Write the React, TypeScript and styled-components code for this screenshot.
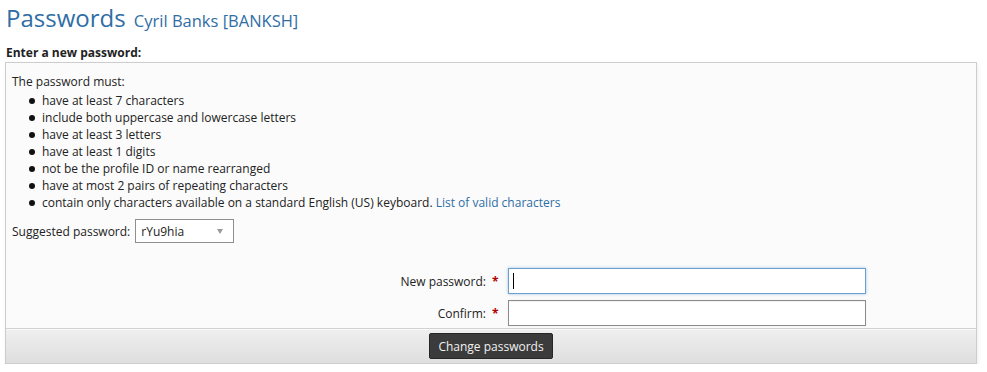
import React from 'react';
import styled, { createGlobalStyle } from 'styled-components';

const GlobalStyle = createGlobalStyle`
  html, body {
    margin: 0;
    padding: 0;
    background: #ffffff;
  }
  body {
    font-family: 'Open Sans', 'Liberation Sans', sans-serif;
    font-size: 12px;
    color: #222;
  }
`;

const StyledPage = styled.div`
  padding: 2px 10px 0 5px;
`;

const StyledHeading = styled.h1`
  margin: 0;
  font-size: 24px;
  font-weight: 400;
  line-height: 32px;
  color: #2f6ea5;
  padding-left: 1px;
`;

const StyledHeadingSub = styled.span`
  font-size: 16.5px;
  margin-left: 2px;
`;

const StyledSectionLabel = styled.div`
  margin-top: 7px;
  font-weight: 700;
  line-height: 17px;
  padding-left: 1px;
`;

const StyledPanel = styled.div`
  margin-top: 1px;
  border: 1px solid #cdcdcd;
  background: #fbfbfb;
  box-shadow: 1px 2px 4px rgba(0, 0, 0, 0.08);
`;

const StyledPanelBody = styled.div`
  padding: 10px 6px 2px 6px;
  line-height: 17px;
`;

const StyledRules = styled.ul`
  margin: 2px 0 0;
  padding-left: 30px;
  list-style: none;
`;

const StyledRule = styled.li`
  &::before {
    content: '';
    display: inline-block;
    width: 6px;
    height: 6px;
    border-radius: 50%;
    background: #111;
    margin-left: -13px;
    margin-right: 7px;
    vertical-align: 1px;
  }
`;

const StyledLink = styled.a`
  color: #2f6ea5;
  text-decoration: none;
`;

const StyledSuggestRow = styled.div`
  display: flex;
  align-items: center;
  gap: 5px;
  margin-top: 8px;
`;

const StyledSelect = styled.div`
  width: 82px;
  height: 22px;
  border: 1px solid #8f8f8f;
  background: #fff;
  display: flex;
  align-items: center;
  justify-content: space-between;
  padding: 0 10px 0 5px;
  box-sizing: content-box;
`;

const StyledArrow = styled.span`
  width: 0;
  height: 0;
  border-left: 3.5px solid transparent;
  border-right: 3.5px solid transparent;
  border-top: 5px solid #9a9a9a;
`;

const StyledFormGrid = styled.div`
  display: grid;
  grid-template-columns: 474px 22px 358px;
  row-gap: 6px;
  align-items: center;
  margin-top: 25px;
`;

const StyledFieldLabel = styled.label`
  text-align: right;
`;

const StyledRequired = styled.span`
  color: #b40000;
  font-weight: 700;
  padding-left: 6px;
`;

const StyledInputWrap = styled.div`
  position: relative;
`;

const StyledInput = styled.input<{ $focused?: boolean }>`
  display: block;
  width: 100%;
  height: 26px;
  box-sizing: border-box;
  margin: 0;
  padding: 0 5px;
  font-family: 'Open Sans', 'Liberation Sans', sans-serif;
  font-size: 12px;
  background: #fff;
  border: 1px solid ${p => (p.$focused ? '#6c9fca' : '#8c8c8c')};
  box-shadow: ${p =>
    p.$focused ? '0 0 3px rgba(90, 150, 210, 0.55)' : 'inset 0 1px 1px rgba(0,0,0,0.06), 0 0 2px rgba(0,0,0,0.06)'};
  outline: none;
`;

const StyledCaret = styled.span`
  position: absolute;
  left: 5px;
  top: 5px;
  width: 1px;
  height: 16px;
  background: #000;
`;

const StyledFooter = styled.div`
  border-top: 1px solid #d2d2d2;
  box-shadow: inset 0 1px 0 #fafafa;
  background: linear-gradient(#efefef, #dedede);
  display: flex;
  justify-content: center;
  padding: 4px 0 4px;
`;

const StyledButton = styled.button`
  height: 26px;
  padding: 0 8px;
  font-family: 'Open Sans', 'Liberation Sans', sans-serif;
  font-size: 12px;
  color: #f2f2f2;
  background: #3b3b3b;
  border: 1px solid #262626;
  border-radius: 2px;
  cursor: pointer;
`;

const rules = [
  'have at least 7 characters',
  'include both uppercase and lowercase letters',
  'have at least 3 letters',
  'have at least 1 digits',
  'not be the profile ID or name rearranged',
  'have at most 2 pairs of repeating characters',
];

const App = () => {
  return (
    <StyledPage>
      <GlobalStyle />
      <StyledHeading>
        Passwords <StyledHeadingSub>Cyril Banks [BANKSH]</StyledHeadingSub>
      </StyledHeading>
      <StyledSectionLabel>Enter a new password:</StyledSectionLabel>
      <StyledPanel>
        <StyledPanelBody>
          <div>The password must:</div>
          <StyledRules>
            {rules.map(rule => (
              <StyledRule key={rule}>{rule}</StyledRule>
            ))}
            <StyledRule>
              contain only characters available on a standard English (US) keyboard.{' '}
              <StyledLink href="#">List of valid characters</StyledLink>
            </StyledRule>
          </StyledRules>
          <StyledSuggestRow>
            <span>Suggested password:</span>
            <StyledSelect>
              <span>rYu9hia</span>
              <StyledArrow />
            </StyledSelect>
          </StyledSuggestRow>
          <StyledFormGrid>
            <StyledFieldLabel>New password:</StyledFieldLabel>
            <StyledRequired>*</StyledRequired>
            <StyledInputWrap>
              <StyledInput type="password" $focused />
              <StyledCaret />
            </StyledInputWrap>
            <StyledFieldLabel>Confirm:</StyledFieldLabel>
            <StyledRequired>*</StyledRequired>
            <StyledInputWrap>
              <StyledInput type="password" />
            </StyledInputWrap>
          </StyledFormGrid>
        </StyledPanelBody>
        <StyledFooter>
          <StyledButton>Change passwords</StyledButton>
        </StyledFooter>
      </StyledPanel>
    </StyledPage>
  );
};

export default App;
